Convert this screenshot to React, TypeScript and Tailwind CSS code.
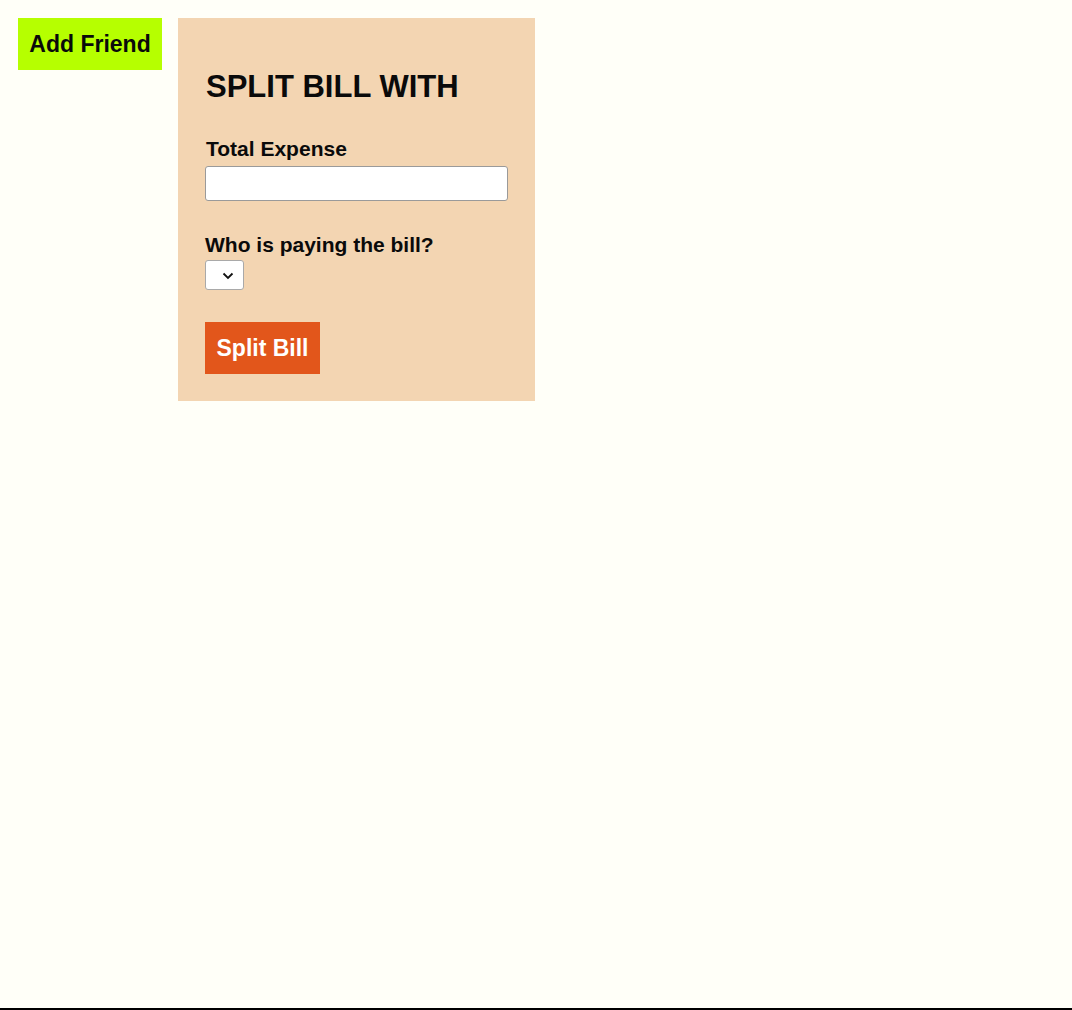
import React, { useState } from 'react';

const friends = ['Clark', 'Sarah', 'Anthony'];

const App: React.FC = () => {
  const [bill, setBill] = useState('');
  const [payer, setPayer] = useState('');

  return (
    <div
      className="min-h-screen bg-[#fffff8] border-b-2 border-black p-[18px] flex items-start gap-4 text-[#0a0a0a]"
      style={{ fontFamily: '"Liberation Sans", Arial, sans-serif' }}
    >
      <button className="w-[144px] h-[52px] bg-[#b6ff00] text-[23px] font-bold flex items-center justify-center">
        Add Friend
      </button>

      {/* Split bill form */}
      <form
        onSubmit={e => e.preventDefault()}
        className="w-[357px] bg-[#f3d5b2] px-[27px] pt-[51px] pb-[27px] flex flex-col"
      >
        <h2 className="text-[31px] leading-[36px] font-bold pl-px">SPLIT BILL WITH</h2>

        <label className="mt-[32px] text-[21px] leading-[23px] font-bold pl-px">Total Expense</label>
        <input
          value={bill}
          onChange={e => setBill(e.target.value)}
          className="mt-[6px] h-[35px] w-[303px] bg-white border border-[#9a9a9a] rounded-[3px] px-2 text-base outline-none"
        />

        <label className="mt-[32px] text-[21px] leading-[23px] font-bold">Who is paying the bill?</label>
        <div className="relative mt-[4px] w-[39px] h-[30px]">
          <select
            value={payer}
            onChange={e => setPayer(e.target.value)}
            className="appearance-none w-full h-full bg-white border border-[#a9a9a9] rounded-[3px] outline-none"
          >
            <option value=""></option>
            {friends.map(f => (
              <option key={f} value={f}>{f}</option>
            ))}
          </select>
          <svg
            className="absolute left-[17px] top-[12px] pointer-events-none"
            width="12"
            height="8"
            viewBox="0 0 12 8"
            fill="none"
          >
            <path d="M1.5 1.5 L6 6 L10.5 1.5" stroke="#111" strokeWidth="1.8" />
          </svg>
        </div>

        <button
          type="submit"
          className="mt-[32px] w-[115px] h-[52px] bg-[#e2561b] text-white text-[23px] font-bold flex items-center justify-center"
        >
          Split Bill
        </button>
      </form>
    </div>
  );
};

export default App;
